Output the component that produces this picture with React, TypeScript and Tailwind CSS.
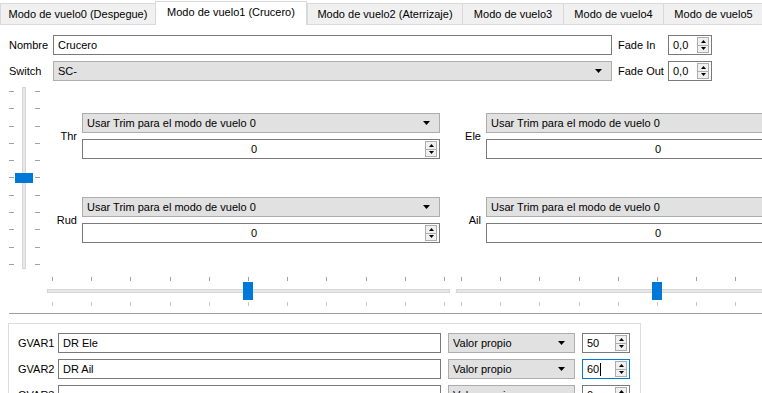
import React from "react";

const tabs = [
  { label: "Modo de vuelo0 (Despegue)", w: "w-[155px]" },
  { label: "Modo de vuelo1 (Crucero)", w: "w-[152px]", active: true },
  { label: "Modo de vuelo2 (Aterrizaje)", w: "w-[155px]" },
  { label: "Modo de vuelo3", w: "w-[101px]" },
  { label: "Modo de vuelo4", w: "w-[100px]" },
  { label: "Modo de vuelo5", w: "w-[100px]" },
];

function Arrows() {
  return (
    <div className="mr-[2px] flex h-[16px] w-[12px] shrink-0 flex-col border border-[#adadad] bg-[#f0f0f0]">
      <div className="flex flex-1 items-center justify-center border-b border-[#adadad]">
        <svg width="5" height="3" viewBox="0 0 5 3">
          <path d="M0 3h5L2.5 0z" fill="#000" />
        </svg>
      </div>
      <div className="flex flex-1 items-center justify-center">
        <svg width="5" height="3" viewBox="0 0 5 3">
          <path d="M0 0h5L2.5 3z" fill="#000" />
        </svg>
      </div>
    </div>
  );
}

function Spin({
  value,
  w,
  center,
  focused,
}: {
  value: string;
  w: string;
  center?: boolean;
  focused?: boolean;
}) {
  return (
    <div
      className={`flex h-[20px] ${w} shrink-0 items-center border bg-white ${
        focused ? "border-[#0078d7]" : "border-[#7a7a7a]"
      }`}
    >
      <div className={`flex flex-1 items-center px-[4px] ${center ? "justify-center" : ""}`}>
        {value}
        {focused && <span className="ml-px inline-block h-[13px] w-px bg-black" />}
      </div>
      <Arrows />
    </div>
  );
}

function Combo({ value, w }: { value: string; w: string }) {
  return (
    <div className={`flex h-[20px] ${w} shrink-0 items-center border border-[#adadad] bg-[#e1e1e1] pl-[4px] pr-[9px]`}>
      <span className="flex-1 truncate">{value}</span>
      <svg width="7" height="4" viewBox="0 0 7 4">
        <path d="M0 0h7L3.5 4z" fill="#000" />
      </svg>
    </div>
  );
}

function Input({ value, w }: { value: string; w: string }) {
  return (
    <div className={`flex h-[20px] ${w} shrink-0 items-center border border-[#7a7a7a] bg-white px-[4px]`}>
      {value}
    </div>
  );
}

function VSlider() {
  return (
    <div className="relative ml-[9px] h-[182px] w-[31px]">
      <div className="absolute left-[13px] top-0 h-full w-[4px] border border-[#d6d6d6] bg-[#e7e7e7]" />
      <div className="flex h-full flex-col justify-between py-[4px]">
        {Array.from({ length: 11 }).map((_, i) => (
          <div key={i} className="flex h-px justify-between">
            <div className="h-px w-[5px] bg-[#a0a0a0]" />
            <div className="h-px w-[5px] bg-[#a0a0a0]" />
          </div>
        ))}
      </div>
      <div className="absolute left-[6px] top-[86px] h-[10px] w-[18px] bg-[#0078d7]" />
    </div>
  );
}

function HSlider() {
  return (
    <div className="relative h-[30px] w-[403px] shrink-0">
      <div className="flex justify-between px-[5px]">
        {Array.from({ length: 11 }).map((_, i) => (
          <div key={i} className="h-[4px] w-px bg-[#a0a0a0]" />
        ))}
      </div>
      <div className="mt-[8px] h-[4px] w-full border border-[#d6d6d6] bg-[#e7e7e7]" />
      <div className="mt-[9px] flex justify-between px-[5px]">
        {Array.from({ length: 11 }).map((_, i) => (
          <div key={i} className="h-[4px] w-px bg-[#c8c8c8]" />
        ))}
      </div>
      <div className="absolute left-[196px] top-[5px] h-[18px] w-[10px] bg-[#0078d7]" />
    </div>
  );
}

function Trim({ label, lw }: { label: string; lw: string }) {
  return (
    <div className="flex shrink-0 items-center">
      <div className={`${lw} pr-[5px] text-right`}>{label}</div>
      <div className="flex flex-col gap-[6px]">
        <Combo value="Usar Trim para el modo de vuelo 0" w="w-[358px]" />
        <Spin value="0" w="w-[358px]" center />
      </div>
    </div>
  );
}

function GvarRow({ n, name, val, focused }: { n: number; name: string; val: string; focused?: boolean }) {
  return (
    <div className="flex items-center">
      <div className="w-[40px]">GVAR{n}</div>
      <Input value={name} w="w-[383px]" />
      <div className="ml-[7px]">
        <Combo value="Valor propio" w="w-[127px]" />
      </div>
      <div className="ml-[7px]">
        <Spin value={val} w="w-[48px]" focused={focused} />
      </div>
    </div>
  );
}

export default function App() {
  return (
    <div className="h-[393px] w-[762px] overflow-hidden bg-white font-['Liberation_Sans',Arial,sans-serif] text-[11px] text-black">
      <div className="flex h-[25px] items-end border-b border-[#d9d9d9] bg-white">
        {tabs.map((t) =>
          t.active ? (
            <div
              key={t.label}
              className={`${t.w} -mb-px flex h-[24px] shrink-0 items-center justify-center border-x border-t border-[#d9d9d9] bg-white pb-[2px]`}
            >
              {t.label}
            </div>
          ) : (
            <div
              key={t.label}
              className={`${t.w} flex h-[21px] shrink-0 items-center justify-center border-l border-t border-[#d9d9d9] bg-[#f0f0f0]`}
            >
              {t.label}
            </div>
          )
        )}
      </div>

      <div className="mt-[10px] flex flex-col gap-[6px] pl-[9px]">
        <div className="flex items-center">
          <div className="w-[44px]">Nombre</div>
          <Input value="Crucero" w="w-[559px]" />
          <div className="w-[56px] pl-[6px]">Fade In</div>
          <Spin value="0,0" w="w-[44px]" />
        </div>
        <div className="flex items-center">
          <div className="w-[44px]">Switch</div>
          <Combo value="SC-" w="w-[559px]" />
          <div className="w-[56px] pl-[6px]">Fade Out</div>
          <Spin value="0,0" w="w-[44px]" />
        </div>
      </div>

      <div className="mt-[6px] flex">
        <div className="w-[47px] shrink-0">
          <VSlider />
        </div>
        <div className="flex flex-col">
          <div className="flex h-[190px] flex-col gap-[38px] pt-[26px]">
            <div className="flex">
              <Trim label="Thr" lw="w-[35px]" />
              <Trim label="Ele" lw="w-[46px]" />
            </div>
            <div className="flex">
              <Trim label="Rud" lw="w-[35px]" />
              <Trim label="Ail" lw="w-[46px]" />
            </div>
          </div>
          <div className="flex gap-[6px]">
            <HSlider />
            <HSlider />
          </div>
        </div>
      </div>

      <div className="ml-[9px] mt-[6px] h-px bg-[#a0a0a0]" />

      <div className="ml-[8px] mt-[9px] w-[633px] border border-[#dcdcdc] px-[9px] pt-[9px]">
        <div className="flex flex-col gap-[6px]">
          <GvarRow n={1} name="DR Ele" val="50" />
          <GvarRow n={2} name="DR Ail" val="60" focused />
          <GvarRow n={3} name="" val="0" />
        </div>
      </div>
    </div>
  );
}
